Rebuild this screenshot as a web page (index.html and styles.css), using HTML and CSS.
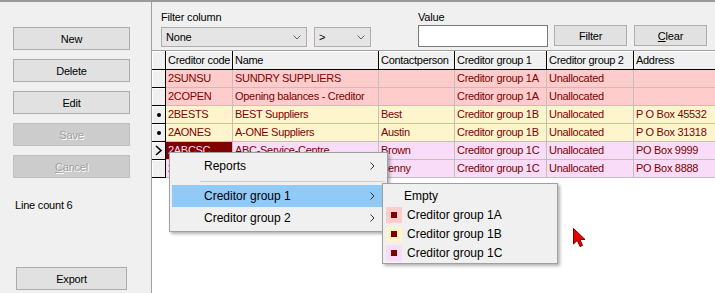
FILE: index.html
```html
<!DOCTYPE html>
<html>
<head>
<meta charset="utf-8">
<link rel="stylesheet" href="styles.css">
</head>
<body>
<div class="app">
  <div class="side">
    <div class="btn">New</div>
    <div class="btn">Delete</div>
    <div class="btn">Edit</div>
    <div class="btn disabled">Save</div>
    <div class="btn disabled"><span><u>C</u>ancel</span></div>
    <div class="linecount">Line count 6</div>
    <div class="btn export">Export</div>
  </div>
  <div class="main">
    <div class="filterbar">
      <div class="fgroup">
        <div class="label">Filter column</div>
        <div class="combos">
          <div class="combo wide"><span>None</span><svg class="chev" width="8" height="5" viewBox="0 0 8 5"><polyline points="0.5,0.5 4,4 7.5,0.5" fill="none" stroke="#606060" stroke-width="1"/></svg></div>
          <div class="combo narrow"><span>&gt;</span><svg class="chev" width="8" height="5" viewBox="0 0 8 5"><polyline points="0.5,0.5 4,4 7.5,0.5" fill="none" stroke="#606060" stroke-width="1"/></svg></div>
        </div>
      </div>
      <div class="fgroup value">
        <div class="label">Value</div>
        <div class="input"></div>
      </div>
      <div class="btn fbtn filter">Filter</div>
      <div class="btn fbtn clear"><span><u>C</u>lear</span></div>
    </div>
    <div class="grid">
      <div class="row head">
        <div class="ind"></div>
        <div class="h">Creditor code</div>
        <div class="h">Name</div>
        <div class="h">Contactperson</div>
        <div class="h">Creditor group 1</div>
        <div class="h">Creditor group 2</div>
        <div class="h last">Address</div>
      </div>
      <div class="row pink">
        <div class="ind"></div>
        <div class="c">2SUNSU</div>
        <div class="c">SUNDRY SUPPLIERS</div>
        <div class="c"></div>
        <div class="c">Creditor group 1A</div>
        <div class="c">Unallocated</div>
        <div class="c last"></div>
      </div>
      <div class="row pink">
        <div class="ind"></div>
        <div class="c">2COPEN</div>
        <div class="c">Opening balances - Creditor</div>
        <div class="c"></div>
        <div class="c">Creditor group 1A</div>
        <div class="c">Unallocated</div>
        <div class="c last"></div>
      </div>
      <div class="row yellow">
        <div class="ind"><span class="dot"></span></div>
        <div class="c">2BESTS</div>
        <div class="c">BEST Suppliers</div>
        <div class="c">Best</div>
        <div class="c">Creditor group 1B</div>
        <div class="c">Unallocated</div>
        <div class="c last">P O Box 45532</div>
      </div>
      <div class="row yellow">
        <div class="ind"><span class="dot"></span></div>
        <div class="c">2AONES</div>
        <div class="c">A-ONE Suppliers</div>
        <div class="c">Austin</div>
        <div class="c">Creditor group 1B</div>
        <div class="c">Unallocated</div>
        <div class="c last">P O Box 31318</div>
      </div>
      <div class="row lilac">
        <div class="ind"><svg width="8" height="11" viewBox="0 0 8 11"><polyline points="1,1 6,5.5 1,10" fill="none" stroke="#000" stroke-width="1.6"/></svg></div>
        <div class="c sel">2ABCSC</div>
        <div class="c">ABC-Service-Centre</div>
        <div class="c">Brown</div>
        <div class="c">Creditor group 1C</div>
        <div class="c">Unallocated</div>
        <div class="c last">PO Box 9999</div>
      </div>
      <div class="row lilac">
        <div class="ind"></div>
        <div class="c">2PENNY</div>
        <div class="c">Penny Stationers</div>
        <div class="c">Penny</div>
        <div class="c">Creditor group 1C</div>
        <div class="c">Unallocated</div>
        <div class="c last">PO Box 8888</div>
      </div>
    </div>
  </div>
</div>

<div class="menu">
  <div class="mi"><span>Reports</span><svg class="arr" width="5" height="8" viewBox="0 0 5 8"><polyline points="0.5,0.5 4,4 0.5,7.5" fill="none" stroke="#333" stroke-width="1"/></svg></div>
  <div class="sep"></div>
  <div class="mi hl"><span>Creditor group 1</span><svg class="arr" width="5" height="8" viewBox="0 0 5 8"><polyline points="0.5,0.5 4,4 0.5,7.5" fill="none" stroke="#333" stroke-width="1"/></svg></div>
  <div class="mi"><span>Creditor group 2</span><svg class="arr" width="5" height="8" viewBox="0 0 5 8"><polyline points="0.5,0.5 4,4 0.5,7.5" fill="none" stroke="#333" stroke-width="1"/></svg></div>
</div>

<div class="sub">
  <div class="si empty">Empty</div>
  <div class="si"><span class="sw sw-a"><span class="sq"></span></span>Creditor group 1A</div>
  <div class="si"><span class="sw sw-b"><span class="sq"></span></span>Creditor group 1B</div>
  <div class="si"><span class="sw sw-c"><span class="sq"></span></span>Creditor group 1C</div>
</div>

<svg class="cursor" width="14" height="20" viewBox="0 0 14 20"><polygon points="0.5,0.5 0.5,16 4.3,12.4 7,18.5 9.5,17.4 6.9,11.5 12,11.5" fill="#e80000" stroke="#7a0000" stroke-width="1" stroke-linejoin="round"/></svg>
</body>
</html>
```
FILE: styles.css
```css
* { box-sizing: border-box; }
html, body { margin: 0; padding: 0; }
body {
  position: relative;
  width: 715px;
  height: 293px;
  overflow: hidden;
  background: #f0f0f0;
  font-family: "Liberation Sans", Arial, sans-serif;
  font-size: 11px;
  letter-spacing: -0.2px;
  color: #000;
}
.app {
  display: flex;
  height: 293px;
  border-top: 2px solid #9a9a9a;
}
.side {
  width: 152px;
  flex: none;
  border-right: 1px solid #a0a0a0;
  display: flex;
  flex-direction: column;
  padding: 25px 0 3px 13px;
}
.btn {
  height: 23px;
  background: #e1e1e1;
  border: 1px solid #adadad;
  display: flex;
  align-items: center;
  justify-content: center;
  font-size: 11px;
  color: #000;
}
.side .btn { width: 117px; margin-bottom: 9px; }
.btn.disabled {
  background: #cccccc;
  border-color: #bfbfbf;
  color: #a0a0a0;
  text-shadow: 1px 1px 0 #fff;
}
.linecount { margin-top: 11px; margin-left: 2px; line-height: 14px; }
.side .btn.export { margin-top: auto; margin-bottom: 0; margin-left: 3px; width: 111px; }

.main { flex: 1; min-width: 0; display: flex; flex-direction: column; }
.filterbar {
  height: 48px;
  flex: none;
  padding: 8px 0 0 9px;
  display: flex;
  align-items: flex-start;
}
.fgroup { display: flex; flex-direction: column; }
.label { height: 14px; line-height: 14px; }
.combos { display: flex; gap: 7px; margin-top: 3px; }
.combo {
  height: 20px;
  background: #e5e5e5;
  border: 1px solid #adadad;
  display: flex;
  align-items: center;
  justify-content: space-between;
  padding: 0 5px 0 4px;
}
.combo.wide { width: 146px; }
.combo.narrow { width: 57px; }
.value { margin-left: 47px; }
.input { margin-top: 1px; width: 130px; height: 22px; background: #fff; border: 1px solid #7a7a7a; }
.fbtn { margin-top: 15px; width: 73px; height: 21px; }
.filter { margin-left: 6px; }
.clear { margin-left: 7px; }

.grid {
  flex: 1;
  background: #fff;
  border-top: 1px solid #a0a0a0;
  overflow: hidden;
  letter-spacing: -0.3px;
}
.row {
  display: grid;
  grid-template-columns: 14px 67px 146px 76px 92px 87px 1fr;
  height: 18px;
}
.row.head { height: 19px; }
.h {
  background: #f0f0f0;
  border-right: 1px solid #000;
  border-bottom: 1px solid #000;
  box-shadow: inset 1px 1px 0 #fff;
  line-height: 18px;
  padding-left: 2px;
  white-space: nowrap;
  overflow: hidden;
}
.ind {
  background: #f0f0f0;
  border-right: 1px solid #000;
  border-bottom: 1px solid #000;
  box-shadow: inset 1px 1px 0 #fff;
  display: flex;
  align-items: center;
  justify-content: center;
}
.dot { width: 4px; height: 4px; border-radius: 50%; background: #000; }
.c {
  border-right: 1px solid #c0c0c0;
  border-bottom: 1px solid #c0c0c0;
  padding-left: 2px;
  line-height: 17px;
  white-space: nowrap;
  overflow: hidden;
  color: #800000;
}
.last { border-right: none; }
.pink .c { background: #ffcccc; }
.yellow .c { background: #fff5cc; }
.lilac .c { background: #f8dcf8; }
.lilac .c.sel { background: #800000; color: #f8dcf8; }

.menu {
  position: absolute;
  left: 169px;
  top: 152px;
  width: 219px;
  background: #f0f0f0;
  border: 1px solid #a0a0a0;
  padding: 2px;
  box-shadow: 2px 2px 3px rgba(0,0,0,0.3);
  font-size: 12px;
  letter-spacing: 0;
}
.mi {
  height: 22px;
  display: flex;
  align-items: center;
  justify-content: space-between;
  padding: 0 10px 0 32px;
}
.mi.hl { background: #91c9f7; }
.sep { height: 8px; display: flex; align-items: center; padding-left: 28px; }
.sep::after { content: ""; flex: 1; height: 1px; background: #cdcdcd; }

.sub {
  position: absolute;
  left: 382px;
  top: 183px;
  width: 176px;
  background: #f0f0f0;
  border: 1px solid #a0a0a0;
  padding: 2px 2px 1px 2px;
  box-shadow: 2px 2px 3px rgba(0,0,0,0.3);
  font-size: 12px;
  letter-spacing: 0;
}
.si { height: 19px; display: flex; align-items: center; padding-left: 1px; }
.si.empty { padding-left: 19px; }
.sw {
  width: 16px;
  height: 16px;
  margin-right: 5px;
  display: flex;
  align-items: center;
  justify-content: center;
}
.sw-a { background: #ffcccc; }
.sw-b { background: #fff5cc; }
.sw-c { background: #f8dcf8; }
.sq { width: 6px; height: 6px; background: #800000; }

.cursor { position: absolute; left: 573px; top: 228px; }
```
